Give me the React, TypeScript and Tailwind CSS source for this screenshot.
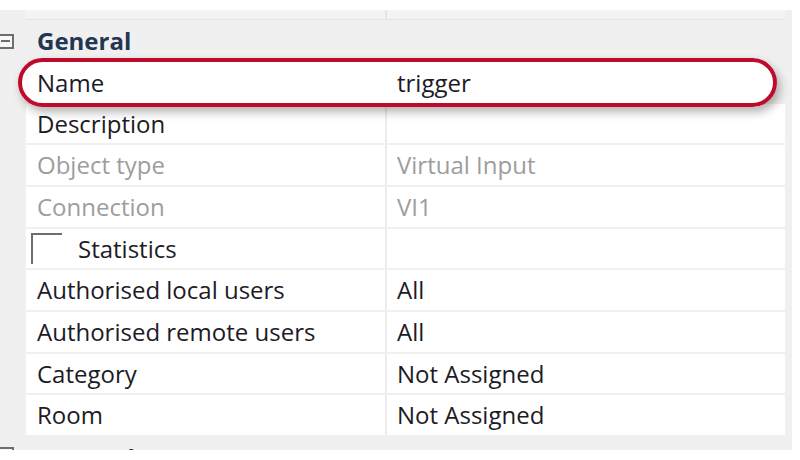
import React from "react";

type Row = { label: string; value: string; h: number; muted?: boolean; check?: boolean; highlight?: boolean };

const rows: Row[] = [
  { label: "Name", value: "trigger", h: 42, highlight: true },
  { label: "Description", value: "", h: 41 },
  { label: "Object type", value: "Virtual Input", h: 42, muted: true },
  { label: "Connection", value: "VI1", h: 42, muted: true },
  { label: "Statistics", value: "", h: 41, check: true },
  { label: "Authorised local users", value: "All", h: 42 },
  { label: "Authorised remote users", value: "All", h: 42 },
  { label: "Category", value: "Not Assigned", h: 41 },
  { label: "Room", value: "Not Assigned", h: 42 },
];

function MinusBox() {
  return (
    <div className="relative ml-[-2px] h-[15px] w-[16px] shrink-0 border-2 border-[#6d6d6d] bg-[#f7f7f7]">
      <div className="absolute left-[1px] right-[2px] top-[4.5px] h-[2px] bg-[#6d6d6d]" />
    </div>
  );
}

export default function App() {
  return (
    <div
      className="relative h-[460px] w-[800px] overflow-hidden bg-white text-[24px] text-[#1d1b26]"
      style={{ fontFamily: '"Open Sans", "Noto Sans", sans-serif' }}
    >
      <div className="mt-[10px] flex h-[440px] w-[792px] flex-col overflow-hidden bg-[#f0f0f0]">
        {/* partially visible row above */}
        <div className="ml-[26px] flex h-[10px] w-[759px] shrink-0 overflow-hidden border-b border-[#e4e4e4] bg-[#f4f4f4]">
          <div className="w-[359px] shrink-0 pl-[9px]">
            <div className="mt-[-25px] leading-[24px]">(Info)</div>
          </div>
          <div className="w-[2px] shrink-0 bg-[#e6e6e6]" />
          <div className="flex-1" />
        </div>

        {/* General header */}
        <div className="flex h-[42px] shrink-0 items-center">
          <MinusBox />
          <div className="ml-[23px] mt-[-1px] font-bold leading-none text-[#243552]">General</div>
        </div>

        {rows.map((r, i) => (
          <div
            key={i}
            className={`relative ml-[26px] flex w-[759px] shrink-0 ${r.highlight ? "z-10" : ""}`}
            style={{ height: r.h }}
          >
            {r.highlight && (
              <div className="absolute left-[-8px] top-[-4px] h-[49px] w-[759px] rounded-full bg-white shadow-[3px_5px_10px_rgba(0,0,0,0.3)]" />
            )}
            <div
              className={`relative flex w-[359px] shrink-0 items-center ${
                r.highlight ? "" : "border-b-2 border-[#f0f0f0] bg-white"
              }`}
            >
              {r.check ? (
                <>
                  <div className="ml-[5px] mt-[4px] h-[31px] w-[31px] self-start border-l-2 border-t-2 border-[#6e6e6e]" />
                  <span className="ml-[16px] leading-none">{r.label}</span>
                </>
              ) : (
                <span className={`ml-[11px] leading-none ${r.muted ? "text-[#9d9d9d]" : ""}`}>{r.label}</span>
              )}
            </div>
            <div
              className={`relative w-[2px] shrink-0 ${
                r.highlight ? "" : "border-b-2 border-[#f0f0f0] bg-[#ececec]"
              }`}
            />
            <div
              className={`relative flex flex-1 items-center ${
                r.highlight ? "" : "border-b-2 border-[#f0f0f0] bg-white"
              }`}
            >
              <span className={`ml-[10px] leading-none ${r.muted ? "text-[#9d9d9d]" : ""}`}>{r.value}</span>
            </div>
            {r.highlight && (
              <div className="pointer-events-none absolute left-[-8px] top-[-4px] h-[49px] w-[759px] rounded-full border-[4px] border-[#bf0b2b]" />
            )}
          </div>
        ))}

        {/* next header, mostly cut off */}
        <div className="flex h-[13px] shrink-0 items-start pt-[10px]">
          <MinusBox />
          <div className="ml-[23px] mt-[-1px] font-bold leading-[24px] text-[#243552]">Network</div>
        </div>
      </div>
    </div>
  );
}
